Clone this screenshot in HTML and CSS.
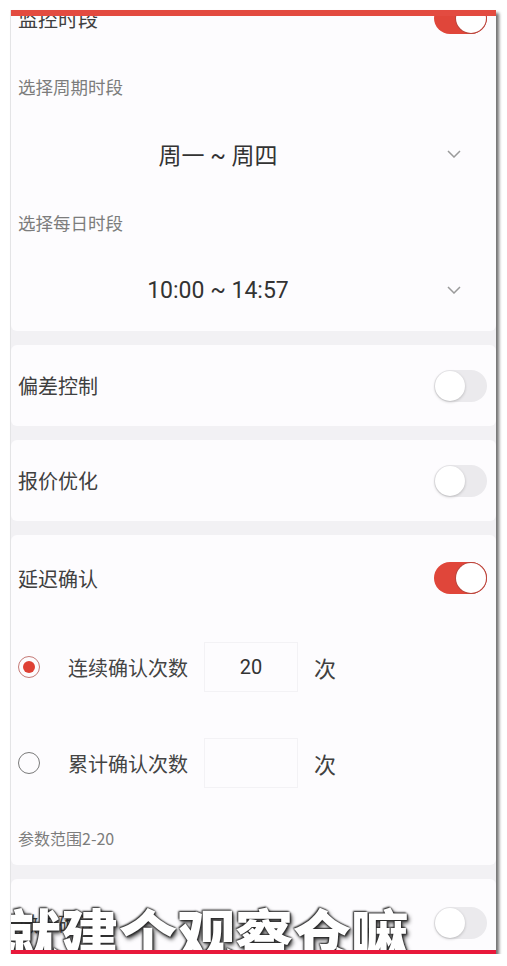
FILE: index.html
```html
<!DOCTYPE html>
<html lang="zh">
<head>
<meta charset="utf-8">
<title>监控设置</title>
<link rel="stylesheet" href="styles.css">
</head>
<body>
<div class="frame">
  <div class="content">
    <section class="card first">
      <div class="row">
        <span class="label">监控时段</span>
        <span class="switch on"><span class="knob"></span></span>
      </div>
      <div class="sub">选择周期时段</div>
      <div class="picker">
        <span class="value">周一 ~ 周四</span>
        <svg class="chev" width="14" height="8" viewBox="0 0 14 8"><path d="M1 1 L7 7 L13 1" fill="none" stroke="#9a9a9a" stroke-width="1.5"/></svg>
      </div>
      <div class="sub">选择每日时段</div>
      <div class="picker">
        <span class="value">10:00 ~ 14:57</span>
        <svg class="chev" width="14" height="8" viewBox="0 0 14 8"><path d="M1 1 L7 7 L13 1" fill="none" stroke="#9a9a9a" stroke-width="1.5"/></svg>
      </div>
    </section>

    <section class="card">
      <div class="row">
        <span class="label">偏差控制</span>
        <span class="switch"><span class="knob"></span></span>
      </div>
    </section>

    <section class="card">
      <div class="row">
        <span class="label">报价优化</span>
        <span class="switch"><span class="knob"></span></span>
      </div>
    </section>

    <section class="card delay">
      <div class="row tall">
        <span class="label">延迟确认</span>
        <span class="switch on"><span class="knob"></span></span>
      </div>
      <div class="radio-row r1">
        <span class="radio checked"><span class="dot"></span></span>
        <span class="radio-label">连续确认次数</span>
        <span class="input">20</span>
        <span class="unit">次</span>
      </div>
      <div class="radio-row r2">
        <span class="radio"></span>
        <span class="radio-label">累计确认次数</span>
        <span class="input"></span>
        <span class="unit">次</span>
      </div>
      <div class="hint">参数范围2-20</div>
    </section>

    <section class="card">
      <div class="row last">
        <span class="label">撤单确认</span>
        <span class="switch"><span class="knob"></span></span>
      </div>
    </section>
  </div>
  <div class="topbar"></div>
  <div class="caption">就建个观察仓嘛</div>
  <div class="bottombar"></div>
</div>
</body>
</html>
```

FILE: styles.css
```css
* { box-sizing: border-box; }

html, body {
  margin: 0;
  padding: 0;
  background: #ffffff;
}

body {
  font-family: Roboto, "Noto Sans CJK SC", sans-serif;
  color: #404040;
}

.frame {
  position: relative;
  margin: 10px 0 0 10px;
  width: 486px;
  height: 944px;
  overflow: hidden;
  background: #f2f1f4;
  border-left: 1px solid #e4e4e6;
  box-shadow: 3px 3px 3px rgba(0, 0, 0, 0.55);
}

.content {
  margin-top: -33px;
  display: flex;
  flex-direction: column;
  gap: 14px;
}

.card {
  background: #fdfcfe;
  border-radius: 6px;
  display: flex;
  flex-direction: column;
}

.row {
  height: 81px;
  display: flex;
  align-items: center;
  justify-content: space-between;
  padding: 0 9px 0 7px;
}

.card.first .row { height: 82px; }
.row.tall { height: 86px; }
.row.last { height: 88px; }

.label {
  font-size: 20px;
  color: #404040;
}

.switch {
  position: relative;
  width: 53px;
  height: 32px;
  border-radius: 16px;
  background: #ebeaed;
  flex: none;
}

.switch .knob {
  position: absolute;
  top: 1px;
  left: 1px;
  width: 30px;
  height: 30px;
  border-radius: 50%;
  background: #ffffff;
  box-shadow: 0 1px 3px rgba(0, 0, 0, 0.22);
}

.switch.on {
  background: #e0463a;
}

.switch.on .knob {
  left: auto;
  right: 1px;
  box-shadow: 0 0 0 1px #b9473e;
}

.sub {
  height: 54px;
  display: flex;
  align-items: center;
  padding-left: 7px;
  font-size: 17.5px;
  color: #7c7c7c;
}

.picker {
  height: 82px;
  display: flex;
  align-items: center;
  padding-left: 7px;
}

.picker .value {
  width: 400px;
  text-align: center;
  font-size: 23px;
  color: #333333;
}

.picker .chev {
  margin-left: 29px;
  flex: none;
}

.radio-row {
  height: 50px;
  display: flex;
  align-items: center;
  padding-left: 7px;
}

.radio-row.r1 { margin-top: 21px; }
.radio-row.r2 { margin-top: 46px; }

.radio {
  position: relative;
  width: 22px;
  height: 22px;
  border-radius: 50%;
  border: 1.5px solid #7a7a7a;
  flex: none;
}

.radio.checked {
  border-color: #c57a76;
}

.radio .dot {
  position: absolute;
  left: 50%;
  top: 50%;
  width: 12px;
  height: 12px;
  margin: -6px 0 0 -6px;
  border-radius: 50%;
  background: #df4034;
}

.radio-label {
  margin-left: 28px;
  font-size: 20px;
  color: #444444;
}

.input {
  margin-left: 16px;
  width: 94px;
  height: 50px;
  border: 1px solid #f3f2f5;
  display: flex;
  align-items: center;
  justify-content: center;
  font-size: 20px;
  color: #333333;
}

.unit {
  margin-left: 16px;
  font-size: 22px;
  color: #404040;
}

.hint {
  margin-top: 40px;
  height: 20px;
  line-height: 20px;
  padding-left: 7px;
  margin-bottom: 17px;
  font-family: "Noto Sans CJK SC", sans-serif;
  font-size: 16px;
  color: #7c7c7c;
}

.topbar {
  position: absolute;
  left: 0;
  top: 0;
  width: 100%;
  height: 6px;
  background: #e34b40;
}

.bottombar {
  position: absolute;
  left: 0;
  bottom: 0;
  width: 100%;
  height: 4px;
  background: #e8193b;
}

.caption {
  position: absolute;
  left: -8px;
  top: 894px;
  font-family: "Noto Sans CJK SC", sans-serif;
  font-weight: 900;
  font-size: 58px;
  line-height: 1;
  color: #ffffff;
  white-space: nowrap;
  text-shadow:
    0 0 2px #2a2a2a,
    1px 1px 2px #2a2a2a,
    -1px -1px 2px #2a2a2a,
    2px 3px 4px rgba(0, 0, 0, 0.75);
}
```
